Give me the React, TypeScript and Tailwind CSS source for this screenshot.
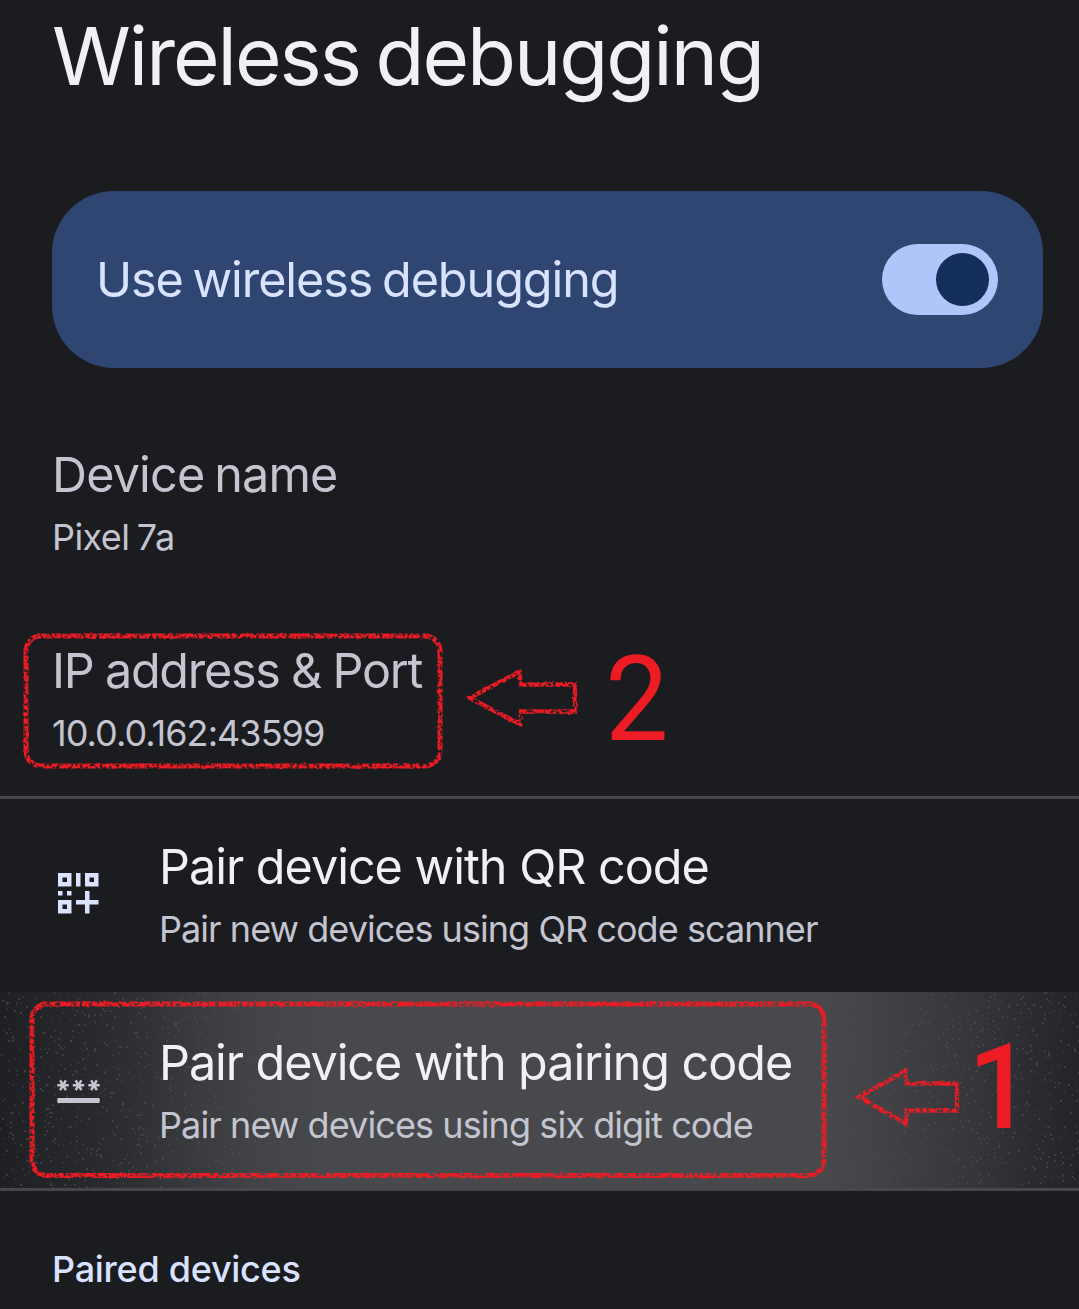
type ItemProps = {
  title: string;
  subtitle: string;
  titleClass: string;
  subtitleClass: string;
};

function ItemText({ title, subtitle, titleClass, subtitleClass }: ItemProps) {
  return (
    <div className="flex flex-col gap-[10px] pt-px whitespace-nowrap">
      <div className={`text-[48.5px] leading-[60px] ${titleClass}`}>{title}</div>
      <div className={`text-[36px] leading-[44px] text-[#c4c5d0] ${subtitleClass}`}>{subtitle}</div>
    </div>
  );
}

function QrAddIcon() {
  return (
    <svg className="size-[40.5px]" viewBox="0 0 9 9" fill="#d9e2ff" fillRule="evenodd">
      <path d="M0 0h3v3H0zM1 1v1h1V1zM4 0h1v3H4zM6 0h3v3H6zM7 1v1h1V1zM0 4h1v1H0zM2 4h1v1H2zM0 6h3v3H0zM1 7v1h1V7z" />
      <path d="M6 4h1v2h2v1H7v2H6V7H4V6h2z" />
    </svg>
  );
}

function PasswordIcon() {
  return (
    <svg className="h-[26px] w-[43px]" viewBox="0 0 43 26">
      <g stroke="#c4c5d0" strokeWidth="2.5">
        {[6, 21.5, 37].map((x) => (
          <path key={x} d={`M${x - 5.7} 7.3h11.4M${x - 2.8} 2.4l5.6 9.8M${x + 2.8} 2.4l-5.6 9.8`} />
        ))}
      </g>
      <rect x="0.3" y="20" width="42.4" height="5" rx="1" fill="#c4c5d0" />
    </svg>
  );
}

// Sparkle particles at both fading ends of the ripple
function sparkle(count: number, seedStart: number) {
  let seed = seedStart;
  const rand = () => {
    seed = (seed * 1664525 + 1013904223) % 4294967296;
    return seed / 4294967296;
  };
  let d = "";
  for (let i = 0; i < count; i++) {
    const left = rand() < 0.56;
    const x = left ? Math.floor(rand() * 155) * 2 : 1078 - Math.floor(rand() * 120) * 2;
    const y = Math.floor(rand() * 98) * 2;
    d += `M${x} ${y}h2v2h-2z`;
  }
  return d;
}
const SPARKLE_DIM = sparkle(900, 7);
const SPARKLE_BRIGHT = sparkle(650, 91);

function Sparkles() {
  return (
    <svg className="absolute inset-0 h-[196px] w-[1079px]" viewBox="0 0 1079 196" shapeRendering="crispEdges">
      <path d={SPARKLE_DIM} fill="#4a4b4e" opacity="0.35" />
      <path d={SPARKLE_BRIGHT} fill="#4a4b4e" opacity="0.65" />
    </svg>
  );
}

function Annotations() {
  return (
    <svg className="pointer-events-none absolute inset-0 h-[1309px] w-[1079px]" viewBox="0 0 1079 1309">
      <defs>
        <filter id="crayon" filterUnits="userSpaceOnUse" x="0" y="600" width="1079" height="620" colorInterpolationFilters="sRGB">
          <feTurbulence type="fractalNoise" baseFrequency="0.3" numOctaves="2" seed="4" result="n" />
          <feDisplacementMap in="SourceGraphic" in2="n" scale="2.5" xChannelSelector="R" yChannelSelector="G" result="d" />
          <feColorMatrix in="n" type="matrix" values="0 0 0 0 0  0 0 0 0 0  0 0 0 0 0  0 0 4 0 -1.1" result="m" />
          <feComposite in="d" in2="m" operator="in" result="rough" />
          <feGaussianBlur in="rough" stdDeviation="0.65" />
        </filter>
      </defs>
      <g fill="none" stroke="#ed1c24" strokeWidth="5" filter="url(#crayon)">
        <rect x="26" y="636" width="414" height="130" rx="15" />
        <rect x="32" y="1004" width="792" height="171.5" rx="15" />
        <path strokeWidth="4.4" d="M469.5 698L519 672L521 684.5H575V711.5H521L520 724Z" />
        <path strokeWidth="4.4" d="M859 1097L905 1071L906.500 1083.500H957V1110.500H907L906 1124Z" />
      </g>
    </svg>
  );
}

export default function App() {
  return (
    <div className="relative h-[1309px] w-[1079px] overflow-hidden bg-[#1b1c1f] font-['Inter',sans-serif]">
      <h1 className="pt-2 pl-[52px] text-[80px] leading-[96px] font-normal tracking-[-2.02px] whitespace-nowrap text-[#f1f0f7] [word-spacing:-5px]">
        Wireless debugging
      </h1>

      <div className="mt-[87px] mr-9 ml-[52px] flex h-[177px] items-center justify-between rounded-[62px] bg-[#2f4672] pr-[45px] pl-11">
        <span className="text-[48.5px] leading-[60px] tracking-[-1.05px] whitespace-nowrap text-[#d9e2ff] [word-spacing:-3px]">
          Use wireless debugging
        </span>
        <div className="flex h-[71px] w-[116px] items-center justify-end rounded-full bg-[#b0c6fb] pr-[9px]">
          <div className="size-[53px] rounded-full bg-[#152f5c]" />
        </div>
      </div>

      <div className="mt-[34px] h-[196px] pt-[42px] pl-[52px]">
        <ItemText
          title="Device name"
          subtitle="Pixel 7a"
          titleClass="text-[#c4c5d0] tracking-[-0.83px] [word-spacing:-3px]"
          subtitleClass="tracking-[-0.6px] [word-spacing:-2px]"
        />
      </div>
      <div className="h-[198px] pt-[42px] pl-[52px]">
        <ItemText
          title="IP address &amp; Port"
          subtitle="10.0.0.162:43599"
          titleClass="text-[#c4c5d0] tracking-[-1.25px] [word-spacing:-1px]"
          subtitleClass="tracking-[-0.95px]"
        />
      </div>

      <div className="flex h-[196px] border-t-[3px] border-[#46474a] pt-[37px] pl-[58px]">
        <div className="w-[101px] pt-[37px]">
          <QrAddIcon />
        </div>
        <ItemText
          title="Pair device with QR code"
          subtitle="Pair new devices using QR code scanner"
          titleClass="text-[#f1f0f7] tracking-[-1px]"
          subtitleClass="tracking-[-0.95px]"
        />
      </div>

      <div className="relative h-[196px] bg-[linear-gradient(90deg,#1f2023_0px,#27282b_80px,#2e2f32_130px,#3a3b3e_195px,#434447_260px,#48494c_330px,#48494c_820px,#3f4043_900px,#343538_980px,#232427_1079px)]">
        <Sparkles />
        <div className="relative flex pt-10 pl-[57px]">
          <div className="w-[102px] pt-[46px]">
            <PasswordIcon />
          </div>
          <ItemText
            title="Pair device with pairing code"
            subtitle="Pair new devices using six digit code"
            titleClass="text-[#f1f0f7] tracking-[-1.06px]"
            subtitleClass="tracking-[-0.91px]"
          />
        </div>
      </div>

      <div className="border-t-[3px] border-[#46474a] pt-[56px] pl-[52px] text-[36px] leading-[44px] font-medium tracking-[-0.28px] text-[#d9e2ff]">
        Paired devices
      </div>

      <Annotations />
      <span className="absolute top-[640px] left-[605px] origin-left scale-x-95 font-['Roboto',sans-serif] text-[119px] leading-[119px] text-[#ed1c24]">
        2
      </span>
      <span className="absolute top-[1028px] left-[968px] origin-left scale-x-95 font-['Roboto',sans-serif] text-[119px] leading-[119px] font-medium text-[#ed1c24]">
        1
      </span>
    </div>
  );
}
